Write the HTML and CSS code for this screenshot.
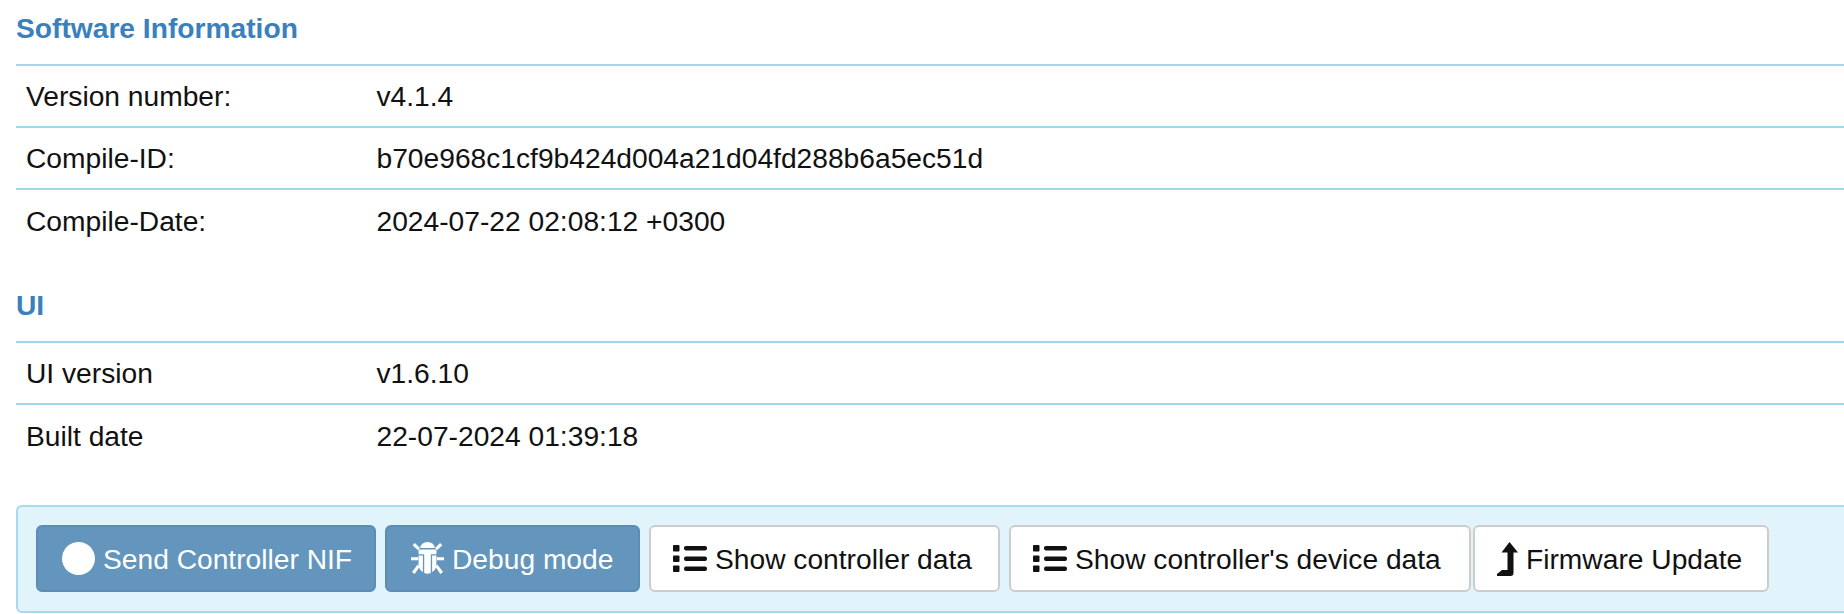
FILE: index.html
```html
<!DOCTYPE html>
<html lang="en">
<head>
<meta charset="utf-8">
<title>Software Information</title>
<link rel="stylesheet" href="styles.css">
</head>
<body>
<h4 class="heading">Software Information</h4>
<table class="info">
<tr><td class="label">Version number:</td><td>v4.1.4</td></tr>
<tr><td class="label">Compile-ID:</td><td>b70e968c1cf9b424d004a21d04fd288b6a5ec51d</td></tr>
<tr><td class="label">Compile-Date:</td><td>2024-07-22 02:08:12 +0300</td></tr>
</table>
<h4 class="heading">UI</h4>
<table class="info">
<tr><td class="label">UI version</td><td>v1.6.10</td></tr>
<tr><td class="label">Built date</td><td>22-07-2024 01:39:18</td></tr>
</table>
<div class="panel">
<button class="btn primary b1"><svg class="ico" width="33" height="33" viewBox="0 0 33 33"><circle cx="16.500" cy="16.500" r="16.500" fill="#fff"/></svg><span class="txt">Send Controller NIF</span></button>
<button class="btn primary b2"><svg class="ico" width="33" height="33" viewBox="0 0 100 100" fill="#fff"><path d="M28 18a22 18 0 0 1 44 0z"/><path d="M23 23h54v14H60v57c-7 3-13 3-20 0V37H23z"/><path d="M23 41h13v50c-8-4-13-12-13-22zM77 41H64v50c8-4 13-12 13-22z"/><path d="M5 10l7-7 15 15-6 7zM95 10l-7-7-15 15 6 7zM0 46h22v9H0zM78 46h22v9H78zM20 68l6 7-15 22-8-6zM80 68l-6 7 15 22 8-6z"/></svg><span class="txt">Debug mode</span></button>
<button class="btn b3"><svg class="ico" width="34" height="27" viewBox="0 0 34 27" fill="#111"><rect y="0" width="6.500" height="6.500" rx="1"/><rect y="10.500" width="6.500" height="6.500" rx="1"/><rect y="20.500" width="6.500" height="6.500" rx="1"/><rect x="11" y="1" width="23" height="4.500" rx="2"/><rect x="11" y="11.500" width="23" height="4.500" rx="2"/><rect x="11" y="21.500" width="23" height="4.500" rx="2"/></svg><span class="txt">Show controller data</span></button>
<button class="btn b4"><svg class="ico" width="34" height="27" viewBox="0 0 34 27" fill="#111"><rect y="0" width="6.500" height="6.500" rx="1"/><rect y="10.500" width="6.500" height="6.500" rx="1"/><rect y="20.500" width="6.500" height="6.500" rx="1"/><rect x="11" y="1" width="23" height="4.500" rx="2"/><rect x="11" y="11.500" width="23" height="4.500" rx="2"/><rect x="11" y="21.500" width="23" height="4.500" rx="2"/></svg><span class="txt">Show controller's device data</span></button>
<button class="btn b5"><svg class="ico" width="21" height="34" viewBox="0 0 21 34" fill="#111"><path d="M12.500 0l8.500 10.500h-4.500V31a3 3 0 0 1-3 3H0v-2l5-4h5.500V10.500H4.500z"/></svg><span class="txt">Firmware Update</span></button>
</div>
</body>
</html>
```
FILE: styles.css
```css
* { box-sizing: border-box; }
html, body { margin: 0; padding: 0; }
body {
  background: #fff;
  color: #111;
  font-family: "Liberation Sans", Arial, sans-serif;
  font-size: 28.2px;
  overflow: hidden;
  padding: 0 0 0 16px;
}
.heading {
  margin: 0;
  height: 64px;
  padding-top: 13px;
  color: #3a80bd;
  font-size: 28.2px;
  line-height: 30px;
  font-weight: bold;
}
.info + .heading { height: 90px; padding-top: 39px; }
.info {
  width: 100%;
  border-collapse: collapse;
}
.info td {
  height: 62px;
  padding: 0 10px;
  border-top: 2px solid #9fd8ec;
  line-height: 30px;
}
.info .label { width: 350.5px; }
.panel {
  display: flex;
  margin-top: 39px;
  height: 108px;
  padding: 18px;
  gap: 9px;
  background: #e2f4fb;
  border: 2px solid #a6daf0;
  border-right: 0;
  border-radius: 6px 0 0 6px;
}
.btn {
  display: flex;
  flex: none;
  align-items: center;
  gap: 8px;
  height: 67px;
  padding: 0 0 0 22px;
  font: inherit;
  color: #111;
  background: #fff;
  border: 2px solid #ccc;
  border-radius: 6px;
}
.txt { padding-top: 2px; }
.primary {
  padding-left: 24px;
  color: #fff;
  background: #6496bd;
  border-color: #5b8db6;
}
.ico { flex: none; }
.b1 { width: 340px; }
.b2 { width: 255px; }
.b3 { width: 351px; }
.b4 { width: 462px; margin-right: -7px; }
.b5 { width: 296px; }
```
